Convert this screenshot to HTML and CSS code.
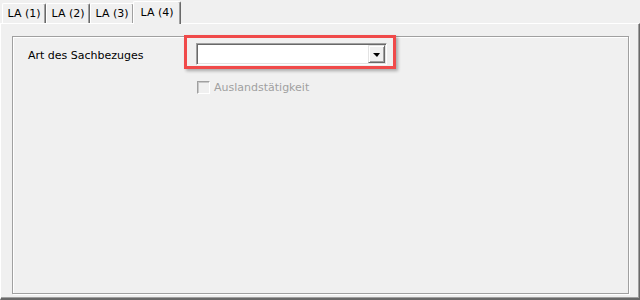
FILE: index.html
```html
<!DOCTYPE html>
<html lang="de">

<head>
    <meta charset="UTF-8">
    <title>LA (4)</title>
    <link rel="stylesheet" href="styles.css">
</head>

<body>
    <div class="tabs">
        <div class="tab">LA (1)</div>
        <div class="tab">LA (2)</div>
        <div class="tab">LA (3)</div>
        <div class="tab active">LA (4)</div>
    </div>

    <div class="panel">
        <div class="group">
            <div class="form-grid">
                <label class="field-label" for="sachbezug">Art des Sachbezuges</label>
                <div class="combo highlight">
                    <div class="combo-text" id="sachbezug"></div>
                    <div class="combo-btn"><span class="arrow"></span></div>
                </div>

                <div class="check disabled">
                    <span class="check-box"></span>
                    <span class="check-label">Auslandstätigkeit</span>
                </div>
            </div>
        </div>
    </div>
</body>

</html>
```

FILE: styles.css
```css
* {
    margin: 0;
    padding: 0;
    box-sizing: border-box;
}

body {
    font-family: 'DejaVu Sans', Verdana, sans-serif;
    font-size: 11px;
    color: #000;
    background: #f0f0f0;
    width: 640px;
    height: 300px;
    overflow: hidden;
}

/* tab strip */
.tabs {
    display: flex;
    align-items: flex-end;
    height: 23px;
    padding-left: 2px;
}

.tab {
    width: 44px;
    height: 20px;
    padding-top: 3px;
    text-align: center;
    background: #f0f0f0;
    border-top: 1px solid #fff;
    border-left: 1px solid #fff;
    border-right: 1px solid #696969;
    box-shadow: inset -1px 0 0 #a0a0a0;
    border-radius: 2px 2px 0 0;
}

.tab.active {
    width: 48px;
    height: 23px;
    margin-left: -1px;
    margin-bottom: -1px;
    padding-top: 4px;
    position: relative;
    z-index: 1;
}

/* page body */
.panel {
    height: 277px;
    padding: 12px 10px 4px 11px;
    border-top: 1px solid #fff;
    border-left: 1px solid #fff;
    border-right: 1px solid #696969;
    border-bottom: 2px solid #696969;
    box-shadow: inset -1px -1px 0 #a0a0a0;
}

.group {
    height: 100%;
    border: 1px solid #a0a0a0;
    box-shadow: 1px 1px 0 #fff, inset 1px 1px 0 #fff;
    padding: 6px 0 0 15px;
}

.form-grid {
    display: grid;
    grid-template-columns: 168px 191px;
    row-gap: 16px;
    align-items: center;
}

.field-label {
    padding-top: 2px;
}

/* combo box */
.combo {
    display: flex;
    height: 22px;
    background: #fff;
    border-top: 1px solid #a0a0a0;
    border-left: 1px solid #a0a0a0;
    border-right: 1px solid #fff;
    border-bottom: 1px solid #fff;
    box-shadow: inset 1px 1px 0 #696969, inset -1px -1px 0 #e3e3e3;
    padding: 1px 1px 1px 2px;
}

.combo-text {
    flex: 1;
}

.combo-btn {
    width: 17px;
    height: 18px;
    background: #f0f0f0;
    border-top: 1px solid #e3e3e3;
    border-left: 1px solid #e3e3e3;
    border-right: 1px solid #696969;
    border-bottom: 1px solid #696969;
    box-shadow: inset 1px 1px 0 #fff, inset -1px -1px 0 #a0a0a0;
    display: flex;
    align-items: center;
    justify-content: center;
}

.arrow {
    width: 0;
    height: 0;
    border-left: 4px solid transparent;
    border-right: 3px solid transparent;
    border-top: 4px solid #000;
    margin-top: 1px;
}

/* red annotation frame */
.highlight {
    position: relative;
}

.highlight::after {
    content: '';
    position: absolute;
    left: -13px;
    top: -9px;
    right: -10px;
    bottom: -5px;
    border: 3px solid #f04a4a;
    box-shadow: 2px 2px 3px rgba(0, 0, 0, 0.3);
    pointer-events: none;
}

/* checkbox */
.check {
    grid-column: 2;
    display: flex;
    align-items: center;
    gap: 4px;
    padding-left: 1px;
}

.check-box {
    width: 13px;
    height: 13px;
    border-top: 1px solid #a0a0a0;
    border-left: 1px solid #a0a0a0;
    border-right: 1px solid #fff;
    border-bottom: 1px solid #fff;
    box-shadow: inset 1px 1px 0 #c8c8c8;
    background: #f0f0f0;
}

.check.disabled .check-label {
    color: #a0a0a0;
}
```
